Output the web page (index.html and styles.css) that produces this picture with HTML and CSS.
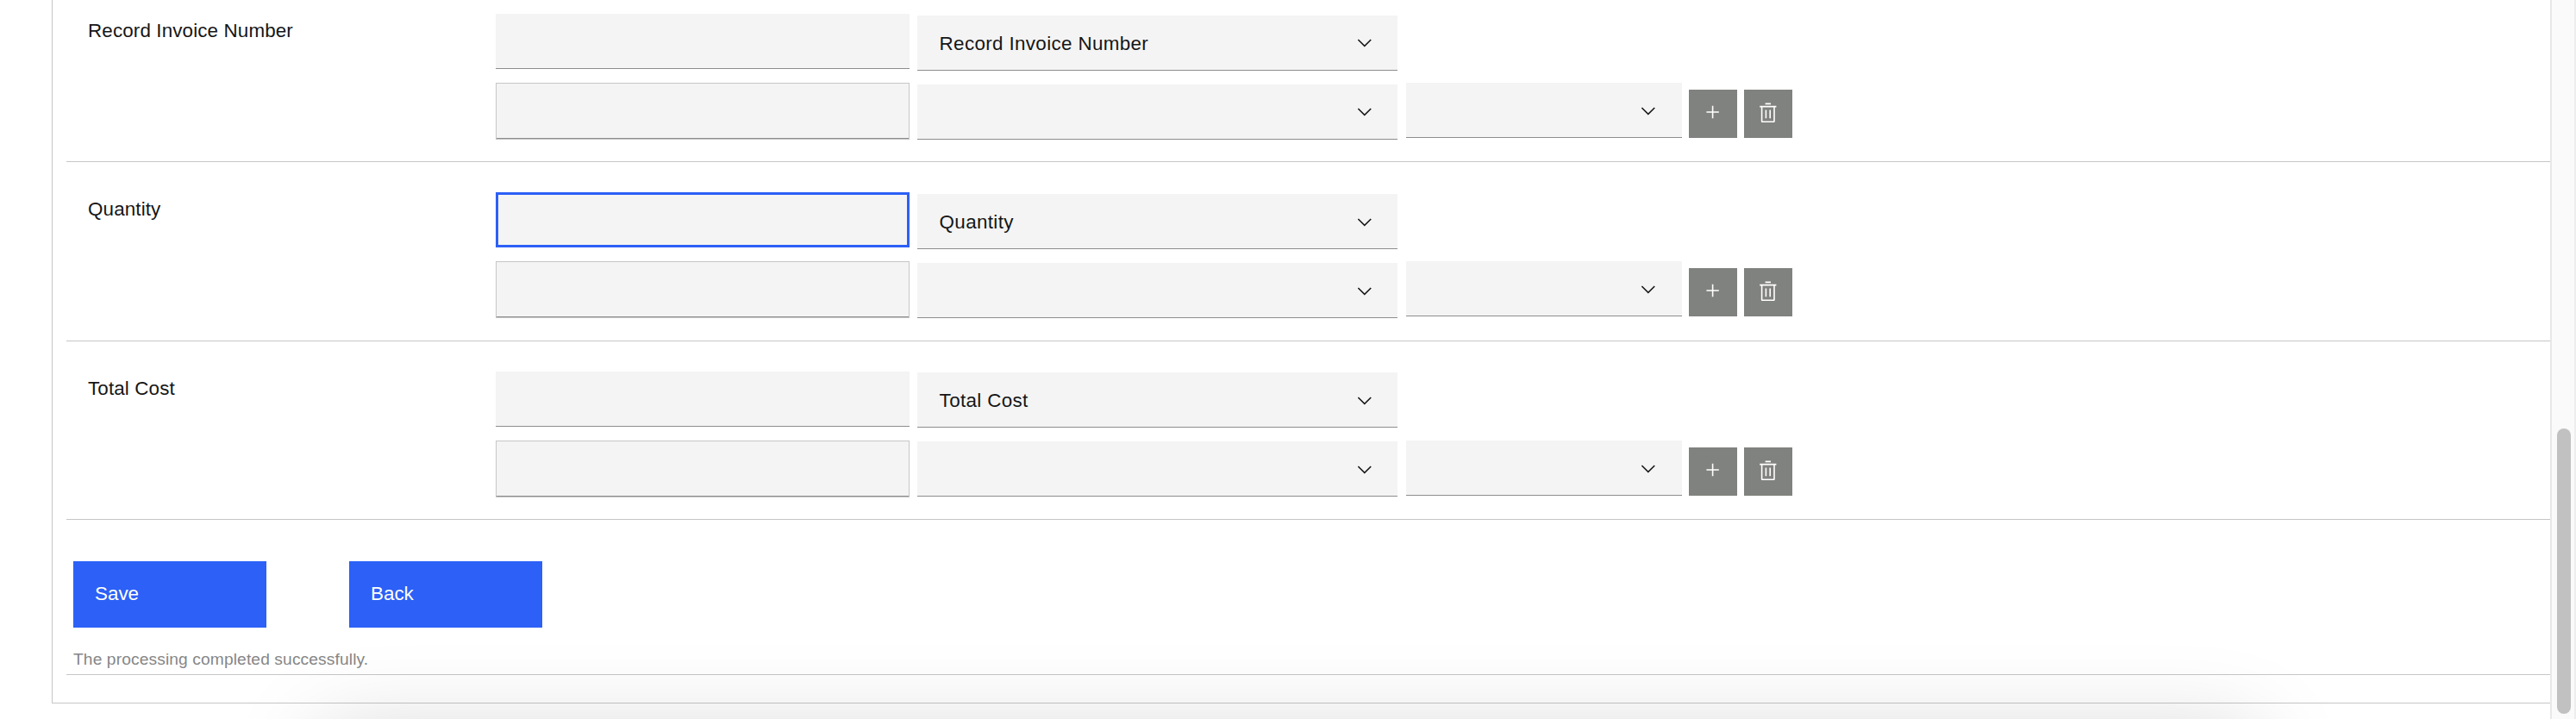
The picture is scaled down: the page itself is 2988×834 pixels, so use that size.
FILE: index.html
```html
<!DOCTYPE html>
<html lang="en">
<head>
<meta charset="utf-8">
<title>Record fields</title>
<link rel="stylesheet" href="styles.css">
</head>
<body>
<svg class="defs" aria-hidden="true">
  <symbol id="chevron" viewBox="0 0 16 16"><path d="M8 11L3 6l.7-.7L8 9.6l4.300-4.300L13 6z"/></symbol>
  <symbol id="add" viewBox="0 0 16 16"><path d="M9 7V3H8v4H4v1h4v4h1V8h4V7z"/></symbol>
  <symbol id="trash" viewBox="0 0 16 16"><path d="M6 6h1v6H6zM9 6h1v6H9zM6 1h4v1H6z"/><path fill-rule="evenodd" d="M2 3v1h1v10c0 .6.4 1 1 1h8c.6 0 1-.4 1-1V4h1V3H2zm2 11V4h8v10H4z"/></symbol>
</svg>
<div class="page">
  <main class="panel">
    <section class="field first">
      <div class="label">Record Invoice Number</div>
      <div class="rows">
        <div class="row">
          <div class="input"></div>
          <div class="select"><span>Record Invoice Number</span><svg><use href="#chevron"/></svg></div>
        </div>
        <div class="row">
          <div class="input outlined"></div>
          <div class="select"><svg><use href="#chevron"/></svg></div>
          <div class="select small"><svg><use href="#chevron"/></svg></div>
          <button class="icon-btn"><svg class="add"><use href="#add"/></svg></button>
          <button class="icon-btn"><svg><use href="#trash"/></svg></button>
        </div>
      </div>
    </section>
    <section class="field second">
      <div class="label">Quantity</div>
      <div class="rows">
        <div class="row">
          <div class="input focused"></div>
          <div class="select"><span>Quantity</span><svg><use href="#chevron"/></svg></div>
        </div>
        <div class="row">
          <div class="input outlined"></div>
          <div class="select"><svg><use href="#chevron"/></svg></div>
          <div class="select small"><svg><use href="#chevron"/></svg></div>
          <button class="icon-btn"><svg class="add"><use href="#add"/></svg></button>
          <button class="icon-btn"><svg><use href="#trash"/></svg></button>
        </div>
      </div>
    </section>
    <section class="field third">
      <div class="label">Total Cost</div>
      <div class="rows">
        <div class="row">
          <div class="input"></div>
          <div class="select"><span>Total Cost</span><svg><use href="#chevron"/></svg></div>
        </div>
        <div class="row">
          <div class="input outlined"></div>
          <div class="select"><svg><use href="#chevron"/></svg></div>
          <div class="select small"><svg><use href="#chevron"/></svg></div>
          <button class="icon-btn"><svg class="add"><use href="#add"/></svg></button>
          <button class="icon-btn"><svg><use href="#trash"/></svg></button>
        </div>
      </div>
    </section>
    <footer class="footer">
      <div class="actions">
        <button class="btn">Save</button>
        <button class="btn">Back</button>
      </div>
      <p class="status">The processing completed successfully.</p>
    </footer>
  </main>
  <div class="scrollbar"><div class="thumb"></div></div>
  <div class="shadow"></div>
</div>
</body>
</html>
```
FILE: styles.css
```css
* { box-sizing: border-box; }
body {
  margin: 0;
  background: #fff;
  color: #161616;
  font-family: "Liberation Sans", Arial, sans-serif;
  font-size: 22.4px;
  overflow: hidden;
}
.defs { position: absolute; width: 0; height: 0; }
.page {
  position: relative;
  display: flex;
  height: 834px;
  overflow: hidden;
}
.panel {
  flex: 1;
  height: 816px;
  margin-left: 60px;
  padding-left: 16px;
  border-left: 1px solid #c6c6c6;
  border-bottom: 1px solid #c6c6c6;
}
.field {
  display: flex;
  padding-top: 35px;
  border-bottom: 1px solid #c6c6c6;
}
.first { height: 188px; padding-top: 16px; }
.second { height: 208px; }
.third { height: 207px; }
.label {
  width: 498px;
  padding: 6px 0 0 25px;
  line-height: 28px;
  letter-spacing: 0.13px;
}
.rows { display: flex; flex-direction: column; gap: 16px; }
.row { display: flex; height: 64px; gap: 8px; }
.input {
  width: 480px;
  height: 64px;
  margin-right: 1px;
  background: #f4f4f4;
  border-bottom: 1px solid #8d8d8d;
}
.outlined {
  height: 66px;
  border: 1px solid #c6c6c6;
  box-shadow: inset 0 -1px #8d8d8d;
}
.focused { border: 3px solid #2c60f6; }
.select {
  display: flex;
  align-items: center;
  width: 557px;
  height: 64px;
  margin-top: 2px;
  padding: 1px 25.400px 0 25.6px;
  background: #f4f4f4;
  border-bottom: 1px solid #8d8d8d;
  letter-spacing: 0.35px;
}
.select span { padding-top: 1px; }
.third .select { margin-top: 1px; }
.select svg { margin-left: auto; }
.second .select svg, .third .select svg { margin-top: 1px; }
.row .small { width: 320px; margin: 0 0 0 2px; padding: 2px 26px 0 0; }
svg { width: 25.6px; height: 25.6px; fill: currentColor; }
button { border: 0; margin: 0; padding: 0; font: inherit; color: #fff; }
.icon-btn {
  display: flex;
  align-items: center;
  justify-content: center;
  width: 56px;
  height: 56px;
  margin-top: 8px;
  padding: 0 1px 2px 0;
  background: #80827f;
}
.icon-btn .add { margin-right: 1px; }
.footer {
  height: 180px;
  padding: 48px 0 0 8px;
  border-bottom: 1px solid #c6c6c6;
}
.actions { display: flex; gap: 96px; }
.btn {
  width: 224px;
  height: 77px;
  padding: 0 0 2px 25px;
  background: #2c60f6;
  text-align: left;
}
.status {
  margin: 24px 0 0;
  color: #868686;
  font-size: 19.2px;
  line-height: 26px;
  letter-spacing: 0.12px;
}
.scrollbar {
  width: 30px;
  padding: 497px 0 0 6px;
  background: #fafafa;
  border-left: 2px solid #e8e8e8;
  border-right: 2px solid #ededed;
}
.thumb { width: 16px; height: 331px; border-radius: 8px; background: #c1c1c1; }
/* Shadow cast upwards by the window below the panel */
.shadow {
  position: absolute;
  top: 850px;
  left: 370px;
  width: 2248px;
  height: 300px;
  box-shadow: 0 0 105px rgba(0, 0, 0, 0.17);
}
```
